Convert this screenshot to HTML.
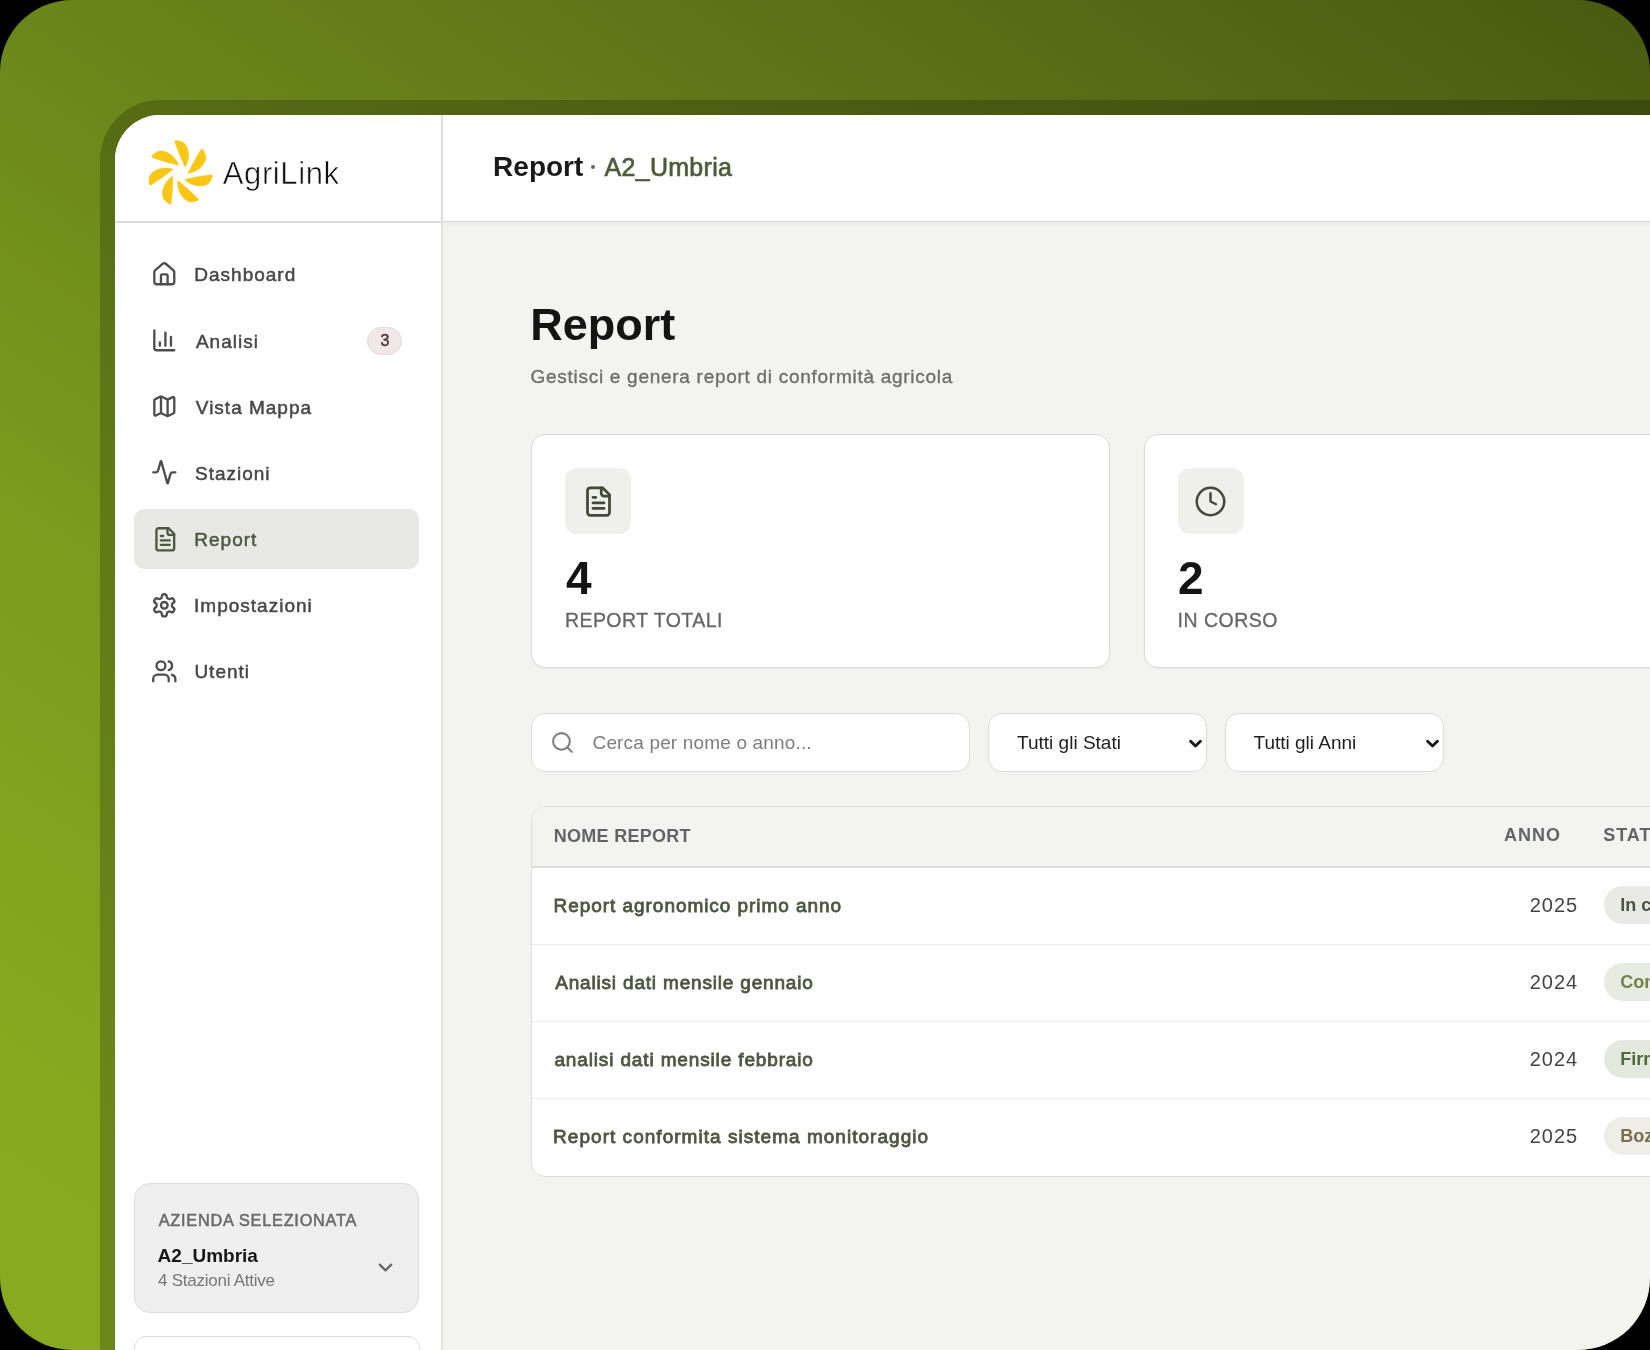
<!DOCTYPE html>
<html>
<head>
<meta charset="utf-8">
<style>
html,body{margin:0;padding:0;}
body{width:1650px;height:1350px;background:#000;overflow:hidden;position:relative;font-family:"Liberation Sans",sans-serif;}
#bg{position:absolute;left:0;top:0;width:1650px;height:1350px;border-radius:72px;overflow:hidden;
 background:linear-gradient(34deg,#87aa20 0%,#86a920 12%,#7a9b1d 35%,#6b871a 54%,#5e7418 73%,#4a5e12 96%,#475a11 100%);}
#frame{position:absolute;left:100px;top:100px;width:1700px;height:1400px;border-top-left-radius:60px;background:rgba(0,0,0,.2);}
#panel{will-change:transform;position:absolute;left:115px;top:115px;width:1600px;height:1300px;border-top-left-radius:45px;background:#f3f3ef;overflow:hidden;}
.a{position:absolute;}
.t{position:absolute;line-height:1;white-space:nowrap;}
svg.i{position:absolute;fill:none;stroke-linecap:round;stroke-linejoin:round;}
</style>
</head>
<body>
<div id="bg">
 <div id="frame"></div>
 <div id="panel">
  <!-- all children positioned in page coords via offset container -->
  <div class="a" style="left:-115px;top:-115px;width:1650px;height:1350px;">

   <!-- sidebar -->
   <div class="a" style="left:115px;top:115px;width:326px;height:1300px;background:#fff;border-right:2px solid #e3e3e1;"></div>
   <!-- header -->
   <div class="a" style="left:443px;top:115px;width:1300px;height:106px;background:#fff;border-bottom:1.5px solid #d8d8d8;box-shadow:0 1px 5px rgba(0,0,0,.06);"></div>
   <!-- sidebar header line -->
   <div class="a" style="left:115px;top:221px;width:326px;height:1.5px;background:#dcdcdc;"></div>

   <!-- logo -->
   <svg class="a" style="left:140px;top:132.7px;" width="80" height="80" viewBox="-40 -40 80 80">
    <g fill="#f8c614" stroke="#f8c614" stroke-width="0.4" stroke-linejoin="round" id="petals"><path transform="rotate(-4.60)" d="M4 6.8Q17 4.6 30.2 4.4Q33.3 4.3 31.8 7L29.2 11.2Q28.4 12.6 26.6 13.2C19.5 16.9 9.39 12.98 4 6.8Z"/><path transform="rotate(46.83)" d="M4 6.8Q17 4.6 30.2 4.4Q33.3 4.3 31.8 7L29.2 11.2Q28.4 12.6 26.6 13.2C19.5 16.9 9.39 12.98 4 6.8Z"/><path transform="rotate(98.26)" d="M4 6.8Q17 4.6 30.2 4.4Q33.3 4.3 31.8 7L29.2 11.2Q28.4 12.6 26.6 13.2C19.5 16.9 9.39 12.98 4 6.8Z"/><path transform="rotate(149.69)" d="M4 6.8Q17 4.6 30.2 4.4Q33.3 4.3 31.8 7L29.2 11.2Q28.4 12.6 26.6 13.2C19.5 16.9 9.39 12.98 4 6.8Z"/><path transform="rotate(201.11)" d="M4 6.8Q17 4.6 30.2 4.4Q33.3 4.3 31.8 7L29.2 11.2Q28.4 12.6 26.6 13.2C19.5 16.9 9.39 12.98 4 6.8Z"/><path transform="rotate(252.54)" d="M4 6.8Q17 4.6 30.2 4.4Q33.3 4.3 31.8 7L29.2 11.2Q28.4 12.6 26.6 13.2C19.5 16.9 9.39 12.98 4 6.8Z"/><path transform="rotate(303.97)" d="M4 6.8Q17 4.6 30.2 4.4Q33.3 4.3 31.8 7L29.2 11.2Q28.4 12.6 26.6 13.2C19.5 16.9 9.39 12.98 4 6.8Z"/></g>
   </svg>
   <div class="t" style="left:222.8px;top:157.8px;font-size:31px;letter-spacing:0.6px;color:#111;-webkit-text-stroke:0.55px #fff;paint-order:fill stroke;">AgriLink</div>

   <!-- header title -->
   <div class="t" style="left:493.1px;top:152.6px;font-size:28px;font-weight:bold;color:#1a1a1a;">Report</div>
   <div class="a" style="left:591.3px;top:165.3px;width:3.4px;height:3.4px;border-radius:2px;background:#666;"></div>
   <div class="t" style="left:604.5px;top:154.8px;font-size:25px;letter-spacing:0.3px;color:#4d5b3b;-webkit-text-stroke:0.65px #4d5b3b;">A2_Umbria</div>

   <!-- nav -->
   <div class="a" style="left:134px;top:509px;width:285px;height:60px;border-radius:10px;background:#e8e9e4;"></div>

   <svg class="i" style="left:150.7px;top:260.7px;" width="26.6" height="26.6" viewBox="0 0 24 24" stroke="#4d4d4d" stroke-width="2.1"><path d="M15 21v-8a1 1 0 0 0-1-1h-4a1 1 0 0 0-1 1v8"/><path d="M3 10a2 2 0 0 1 .709-1.528l7-5.999a2 2 0 0 1 2.582 0l7 5.999A2 2 0 0 1 21 10v9a2 2 0 0 1-2 2H5a2 2 0 0 1-2-2z"/></svg>
   <div class="t" style="left:194.3px;top:265.1px;font-size:19px;letter-spacing:1px;color:#474747;-webkit-text-stroke:0.5px #474747;">Dashboard</div>

   <svg class="i" style="left:150.7px;top:327.2px;" width="26.6" height="26.6" viewBox="0 0 24 24" stroke="#4d4d4d" stroke-width="2.1"><path d="M3 3v16a2 2 0 0 0 2 2h16"/><path d="M18 17V9"/><path d="M13 17V5"/><path d="M8 17v-3"/></svg>
   <div class="t" style="left:195.9px;top:331.6px;font-size:19px;letter-spacing:1px;color:#474747;-webkit-text-stroke:0.5px #474747;">Analisi</div>
   <div class="a" style="left:367px;top:327px;width:33px;height:25.5px;border-radius:14px;background:#f1e8e8;border:1px solid #e6dada;"></div>
   <div class="t" style="left:380.4px;top:333.4px;font-size:16px;color:#4e3632;-webkit-text-stroke:0.45px #4e3632;">3</div>

   <svg class="i" style="left:150.7px;top:393.2px;" width="26.6" height="26.6" viewBox="0 0 24 24" stroke="#4d4d4d" stroke-width="2.1"><path d="M14.106 5.553a2 2 0 0 0 1.788 0l3.659-1.83A1 1 0 0 1 21 4.619v12.764a1 1 0 0 1-.553.894l-4.553 2.277a2 2 0 0 1-1.788 0l-4.212-2.106a2 2 0 0 0-1.788 0l-3.659 1.83A1 1 0 0 1 3 19.381V6.618a1 1 0 0 1 .553-.894l4.553-2.277a2 2 0 0 1 1.788 0z"/><path d="M15 5.764v15"/><path d="M9 3.236v15"/></svg>
   <div class="t" style="left:195.8px;top:397.6px;font-size:19px;letter-spacing:1px;color:#474747;-webkit-text-stroke:0.5px #474747;">Vista Mappa</div>

   <svg class="i" style="left:150.7px;top:459.2px;" width="26.6" height="26.6" viewBox="0 0 24 24" stroke="#4d4d4d" stroke-width="2.1"><path d="M22 12h-2.48a2 2 0 0 0-1.93 1.46l-2.35 8.36a.25.25 0 0 1-.48 0L9.24 2.18a.25.25 0 0 0-.48 0l-2.35 8.36A2 2 0 0 1 4.49 12H2"/></svg>
   <div class="t" style="left:195px;top:463.6px;font-size:19px;letter-spacing:1px;color:#474747;-webkit-text-stroke:0.5px #474747;">Stazioni</div>

   <svg class="i" style="left:151.7px;top:525.7px;" width="26.6" height="26.6" viewBox="0 0 24 24" stroke="#4d5742" stroke-width="2.1"><path d="M15 2H6a2 2 0 0 0-2 2v16a2 2 0 0 0 2 2h12a2 2 0 0 0 2-2V7Z"/><path d="M14 2v4a2 2 0 0 0 2 2h4"/><path d="M10 9H8"/><path d="M16 13H8"/><path d="M16 17H8"/></svg>
   <div class="t" style="left:194.3px;top:530.1px;font-size:19px;letter-spacing:1px;color:#4d5742;-webkit-text-stroke:0.5px #4d5742;">Report</div>

   <svg class="i" style="left:150.7px;top:591.7px;" width="26.6" height="26.6" viewBox="0 0 24 24" stroke="#4d4d4d" stroke-width="2.1"><path d="M12.22 2h-.44a2 2 0 0 0-2 2v.18a2 2 0 0 1-1 1.73l-.43.25a2 2 0 0 1-2 0l-.15-.08a2 2 0 0 0-2.730.73l-.22.38a2 2 0 0 0 .73 2.73l.15.1a2 2 0 0 1 1 1.72v.51a2 2 0 0 1-1 1.74l-.15.09a2 2 0 0 0-.73 2.73l.22.38a2 2 0 0 0 2.73.73l.15-.08a2 2 0 0 1 2 0l.43.25a2 2 0 0 1 1 1.73V20a2 2 0 0 0 2 2h.44a2 2 0 0 0 2-2v-.18a2 2 0 0 1 1-1.73l.43-.25a2 2 0 0 1 2 0l.15.08a2 2 0 0 0 2.73-.73l.22-.39a2 2 0 0 0-.73-2.73l-.15-.08a2 2 0 0 1-1-1.74v-.5a2 2 0 0 1 1-1.74l.15-.09a2 2 0 0 0 .73-2.73l-.22-.38a2 2 0 0 0-2.73-.73l-.15.08a2 2 0 0 1-2 0l-.43-.25a2 2 0 0 1-1-1.73V4a2 2 0 0 0-2-2z"/><circle cx="12" cy="12" r="3"/></svg>
   <div class="t" style="left:194.1px;top:596.1px;font-size:19px;letter-spacing:1px;color:#474747;-webkit-text-stroke:0.5px #474747;">Impostazioni</div>

   <svg class="i" style="left:150.7px;top:657.7px;" width="26.6" height="26.6" viewBox="0 0 24 24" stroke="#4d4d4d" stroke-width="2.1"><path d="M16 21v-2a4 4 0 0 0-4-4H6a4 4 0 0 0-4 4v2"/><circle cx="9" cy="7" r="4"/><path d="M22 21v-2a4 4 0 0 0-3-3.87"/><path d="M16 3.13a4 4 0 0 1 0 7.75"/></svg>
   <div class="t" style="left:194.4px;top:662.1px;font-size:19px;letter-spacing:1px;color:#474747;-webkit-text-stroke:0.5px #474747;">Utenti</div>

   <!-- azienda card -->
   <div class="a" style="left:134px;top:1183px;width:283px;height:128px;border-radius:16px;background:#efefef;border:1.5px solid #dedede;"></div>
   <div class="t" style="left:158.7px;top:1211.7px;font-size:16.25px;letter-spacing:0.78px;color:#6b6b6b;-webkit-text-stroke:0.55px #6b6b6b;">AZIENDA SELEZIONATA</div>
   <div class="t" style="left:157.6px;top:1245.5px;font-size:19px;font-weight:bold;color:#161616;">A2_Umbria</div>
   <div class="t" style="left:158.1px;top:1271.8px;font-size:17px;letter-spacing:-0.26px;color:#777;">4 Stazioni Attive</div>
   <svg class="i" style="left:373.6px;top:1255.5px;" width="23" height="23" viewBox="0 0 24 24" stroke="#666" stroke-width="2.3"><path d="m6 9 6 6 6-6"/></svg>
   <div class="a" style="left:134px;top:1336px;width:284px;height:60px;border-radius:12px;background:#fff;border:1.5px solid #dedede;"></div>

   <!-- page title -->
   <div class="t" style="left:530.3px;top:302.1px;font-size:45px;font-weight:bold;color:#141414;">Report</div>
   <div class="t" style="left:530.5px;top:366.8px;font-size:19px;letter-spacing:0.72px;color:#6e6e6e;-webkit-text-stroke:0.35px #6e6e6e;">Gestisci e genera report di conformità agricola</div>

   <!-- cards -->
   <div class="a" style="left:531px;top:434px;width:577px;height:232px;border-radius:14px;background:#fff;border:1.5px solid #dadad6;box-shadow:0 1px 2px rgba(0,0,0,.04);"></div>
   <div class="a" style="left:565px;top:468px;width:66px;height:66px;border-radius:12px;background:#efefec;"></div>
   <svg class="i" style="left:581.5px;top:484.5px;" width="33" height="33" viewBox="0 0 24 24" stroke="#414b36" stroke-width="2"><path d="M15 2H6a2 2 0 0 0-2 2v16a2 2 0 0 0 2 2h12a2 2 0 0 0 2-2V7Z"/><path d="M14 2v4a2 2 0 0 0 2 2h4"/><path d="M10 9H8"/><path d="M16 13H8"/><path d="M16 17H8"/></svg>
   <div class="t" style="left:565.9px;top:555.1px;font-size:46px;font-weight:bold;color:#141414;">4</div>
   <div class="t" style="left:564.9px;top:611.1px;font-size:19.5px;letter-spacing:0.45px;color:#666;-webkit-text-stroke:0.3px #666;">REPORT TOTALI</div>

   <div class="a" style="left:1143.5px;top:434px;width:577px;height:232px;border-radius:14px;background:#fff;border:1.5px solid #dadad6;box-shadow:0 1px 2px rgba(0,0,0,.04);"></div>
   <div class="a" style="left:1178px;top:468px;width:66px;height:66px;border-radius:12px;background:#efefec;"></div>
   <svg class="i" style="left:1194px;top:484.5px;" width="33" height="33" viewBox="0 0 24 24" stroke="#414b36" stroke-width="1.8"><circle cx="12" cy="12" r="10"/><polyline points="12 6 12 12 16 14"/></svg>
   <div class="t" style="left:1177.9px;top:555.1px;font-size:46px;font-weight:bold;color:#141414;">2</div>
   <div class="t" style="left:1177.5px;top:611.1px;font-size:19.5px;letter-spacing:0.5px;color:#666;-webkit-text-stroke:0.3px #666;">IN CORSO</div>

   <!-- filters -->
   <div class="a" style="left:531px;top:712.5px;width:437px;height:57px;border-radius:14px;background:#fff;border:1.5px solid #dcdcd8;"></div>
   <svg class="i" style="left:550px;top:730px;" width="25" height="25" viewBox="0 0 24 24" stroke="#808080" stroke-width="2"><circle cx="11" cy="11" r="8"/><path d="m21 21-4.3-4.3"/></svg>
   <div class="t" style="left:592.5px;top:733.1px;font-size:19px;letter-spacing:0.16px;color:#7d7d7d;">Cerca per nome o anno...</div>

   <div class="a" style="left:988px;top:712.5px;width:217px;height:57px;border-radius:14px;background:#fff;border:1.5px solid #dcdcd8;"></div>
   <div class="t" style="left:1017.1px;top:733px;font-size:19px;color:#1e1e1e;">Tutti gli Stati</div>
   <svg class="i" style="left:1189px;top:739px;" width="13" height="10" viewBox="0 0 13 10" stroke="#1a1a1a" stroke-width="2.9"><path d="M1.6 2.2 6.5 7 11.4 2.2"/></svg>

   <div class="a" style="left:1225px;top:712.5px;width:217px;height:57px;border-radius:14px;background:#fff;border:1.5px solid #dcdcd8;"></div>
   <div class="t" style="left:1253.5px;top:733px;font-size:19px;color:#1e1e1e;">Tutti gli Anni</div>
   <svg class="i" style="left:1426px;top:739px;" width="13" height="10" viewBox="0 0 13 10" stroke="#1a1a1a" stroke-width="2.9"><path d="M1.6 2.2 6.5 7 11.4 2.2"/></svg>

   <!-- table -->
   <div class="a" style="left:531px;top:806px;width:1200px;height:369px;border-radius:14px;background:#fff;border:1.5px solid #dededa;overflow:hidden;">
     <div class="a" style="left:0;top:0;width:1200px;height:59px;background:#f3f3ef;border-bottom:2px solid #dcdcd8;"></div>
     <div class="a" style="left:0;top:137px;width:1200px;height:1px;background:#ecece9;"></div>
     <div class="a" style="left:0;top:214px;width:1200px;height:1px;background:#ecece9;"></div>
     <div class="a" style="left:0;top:291px;width:1200px;height:1px;background:#ecece9;"></div>
   </div>
   <div class="t" style="left:553.8px;top:826.5px;font-size:18px;font-weight:bold;letter-spacing:0.27px;color:#626468;">NOME REPORT</div>
   <div class="t" style="left:1504.1px;top:826.2px;font-size:18px;font-weight:bold;letter-spacing:1.0px;color:#626468;">ANNO</div>
   <div class="t" style="left:1603.2px;top:826.2px;font-size:18px;font-weight:bold;letter-spacing:1.0px;color:#626468;">STATO</div>

   <div class="t" style="left:553.6px;top:895.7px;font-size:19px;letter-spacing:0.95px;color:#4d5642;-webkit-text-stroke:0.8px #4d5642;">Report agronomico primo anno</div>
   <div class="t" style="left:1529.7px;top:895.1px;font-size:20px;letter-spacing:0.98px;color:#444;">2025</div>
   <div class="a" style="left:1603.5px;top:886px;width:200px;height:38px;border-radius:19px;background:#e9eae5;"></div>
   <div class="t" style="left:1620.3px;top:896.3px;font-size:18px;font-weight:bold;color:#4b5340;">In corso</div>

   <div class="t" style="left:555.2px;top:972.7px;font-size:19px;letter-spacing:0.82px;color:#4d5642;-webkit-text-stroke:0.8px #4d5642;">Analisi dati mensile gennaio</div>
   <div class="t" style="left:1529.7px;top:972.1px;font-size:20px;letter-spacing:0.98px;color:#444;">2024</div>
   <div class="a" style="left:1603.5px;top:963px;width:200px;height:38px;border-radius:19px;background:#e7ebe1;"></div>
   <div class="t" style="left:1620.3px;top:973.3px;font-size:18px;font-weight:bold;color:#718346;">Completato</div>

   <div class="t" style="left:554.4px;top:1049.7px;font-size:19px;letter-spacing:0.86px;color:#4d5642;-webkit-text-stroke:0.8px #4d5642;">analisi dati mensile febbraio</div>
   <div class="t" style="left:1529.7px;top:1049.1px;font-size:20px;letter-spacing:0.98px;color:#444;">2024</div>
   <div class="a" style="left:1603.5px;top:1040px;width:200px;height:38px;border-radius:19px;background:#e4e9e0;"></div>
   <div class="t" style="left:1620.3px;top:1050.3px;font-size:18px;font-weight:bold;color:#4f6b38;">Firmato</div>

   <div class="t" style="left:553.1px;top:1126.8px;font-size:19px;letter-spacing:1.03px;color:#4d5642;-webkit-text-stroke:0.8px #4d5642;">Report conformita sistema monitoraggio</div>
   <div class="t" style="left:1529.7px;top:1126.1px;font-size:20px;letter-spacing:0.98px;color:#444;">2025</div>
   <div class="a" style="left:1603.5px;top:1117px;width:200px;height:38px;border-radius:19px;background:#eeede8;"></div>
   <div class="t" style="left:1620.3px;top:1127.3px;font-size:18px;font-weight:bold;color:#7a6e50;">Bozza</div>

  </div>
 </div>
</div>
</body>
</html>
